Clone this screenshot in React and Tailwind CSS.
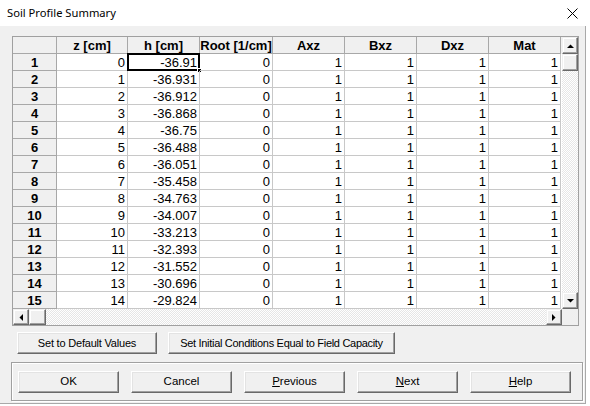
import React from "react";

const H = [-36.91, -36.931, -36.912, -36.868, -36.75, -36.488, -36.051, -35.458, -34.763, -34.007, -33.213, -32.393, -31.552, -30.696, -29.824];

const COLS = [
  { label: "z [cm]", w: "w-[71px]" },
  { label: "h [cm]", w: "w-[72px]" },
  { label: "Root [1/cm]", w: "w-[73px]" },
  { label: "Axz", w: "w-[72px]" },
  { label: "Bxz", w: "w-[72px]" },
  { label: "Dxz", w: "w-[72px]" },
  { label: "Mat", w: "w-[72px]" },
];

function Btn({ children, className = "" }) {
  return (
    <div
      className={
        "h-[22px] flex items-center justify-center bg-[#f0f0f0] border border-t-white border-l-white border-r-[#696969] border-b-[#696969] shadow-[inset_-1px_-1px_#a0a0a0,inset_1px_1px_#e3e3e3] text-black shrink-0 whitespace-nowrap " +
        className
      }
    >
      {children}
    </div>
  );
}

function Arrow({ dir }) {
  const pts = {
    up: "0,4 7,4 3.5,0.5",
    down: "0,0 7,0 3.5,3.5",
    left: "4,0 4,7 0.5,3.5",
    right: "0,0 0,7 3.5,3.5",
  }[dir];
  const vert = dir === "up" || dir === "down";
  return (
    <svg width={vert ? 7 : 4} height={vert ? 4 : 7} viewBox={vert ? "0 0 7 4" : "0 0 4 7"}>
      <polygon points={pts} fill="#000" />
    </svg>
  );
}

function SBtn({ children, className = "" }) {
  return (
    <div
      className={
        "bg-[#f0f0f0] border border-t-[#f0f0f0] border-l-[#f0f0f0] border-r-[#696969] border-b-[#696969] shadow-[inset_-1px_-1px_#a0a0a0,inset_1px_1px_#fff] flex items-center justify-center shrink-0 " +
        className
      }
    >
      {children}
    </div>
  );
}

const dither =
  "bg-[image:repeating-conic-gradient(#ffffff_0_25%,#e6e6e6_0_50%)] bg-[length:2px_2px]";

export default function App() {
  const rows = H.map((h, i) => [String(i), String(h), "0", "1", "1", "1", "1"]);
  return (
    <div
      className="w-[590px] h-[406px] bg-white overflow-hidden text-black"
      style={{ fontFamily: '"Liberation Sans", Arial, sans-serif' }}
    >
      {/* Title bar */}
      <div className="h-[26px] flex items-center justify-between pl-[7px] pr-[12px]">
        <span className="text-[11.2px] text-black" style={{ fontFamily: '"Noto Sans", "Open Sans", sans-serif' }}>
          Soil Profile Summary
        </span>
        <svg width="11" height="11" viewBox="0 0 11 11" className="mt-[1px]">
          <path d="M0.5 0.5 L10.5 10.5 M10.5 0.5 L0.5 10.5" stroke="#000" strokeWidth="1" />
        </svg>
      </div>

      {/* Body */}
      <div className="w-[586px] h-[378px] bg-[#f0f0f0] border-r border-b border-[#a9a9a9] pt-[10px] pl-[12px]">
        {/* Grid */}
        <div className="w-[567px] h-[290px] border border-[#a0a0a0] flex flex-col bg-white">
          <div className="flex h-[272px]">
            <div className="w-[549px] overflow-hidden">
              {/* Header */}
              <div className="flex h-[17px] bg-[#f0f0f0]">
                <div className="w-[44px] shrink-0 border-r border-b border-[#a8a8a8]" />
                {COLS.map((c) => (
                  <div
                    key={c.label}
                    className={c.w + " shrink-0 border-r border-b border-[#a8a8a8] flex items-center justify-center text-[13px] font-bold leading-none whitespace-nowrap"}
                  >
                    {c.label}
                  </div>
                ))}
              </div>
              {rows.map((r, i) => (
                <div key={i} className="flex h-[17px]">
                  <div className="w-[44px] shrink-0 bg-[#f0f0f0] border-r border-b border-[#a8a8a8] flex items-center justify-center text-[13px] font-bold leading-none">
                    {i + 1}
                  </div>
                  {r.map((v, j) => (
                    <div
                      key={j}
                      className={
                        COLS[j].w +
                        " shrink-0 border-r border-b border-[#c8c8c8] flex items-center justify-end pr-[2px] text-[13px] leading-none relative"
                      }
                    >
                      {v}
                      {i === 0 && j === 1 && (
                        <>
                          <div className="absolute left-[-1px] top-[-1px] right-[-1px] bottom-[-1px] border-2 border-black" />
                          <div className="absolute right-[-3px] bottom-[-3px] w-[5px] h-[5px] bg-black border border-white" />
                        </>
                      )}
                    </div>
                  ))}
                </div>
              ))}
            </div>
            {/* Vertical scrollbar */}
            <div className="w-[16px] flex flex-col">
              <SBtn className="h-[17px]">
                <Arrow dir="up" />
              </SBtn>
              <SBtn className="h-[17px]" />
              <div className={"flex-1 " + dither} />
              <SBtn className="h-[17px]">
                <Arrow dir="down" />
              </SBtn>
            </div>
          </div>
          {/* Horizontal scrollbar */}
          <div className="flex h-[16px]">
            <div className="w-[549px] flex">
              <SBtn className="w-[16px]">
                <Arrow dir="left" />
              </SBtn>
              <SBtn className="w-[17px]" />
              <div className={"flex-1 " + dither} />
              <SBtn className="w-[16px]">
                <Arrow dir="right" />
              </SBtn>
            </div>
            <div className="w-[16px] bg-[#f0f0f0]" />
          </div>
        </div>

        {/* Action buttons */}
        <div className="mt-[6px] ml-[5px] flex gap-[11px]">
          <Btn className="w-[140px] text-[11px] tracking-[-0.2px]">Set to Default Values</Btn>
          <Btn className="w-[227px] text-[11px] tracking-[-0.3px]">Set Initial Conditions Equal to Field Capacity</Btn>
        </div>

        {/* Group box */}
        <div className="mt-[8px] ml-[-1px] w-[572px] h-[39px] border border-[#a0a0a0] shadow-[inset_1px_1px_#fff,1px_1px_#fff] flex items-center pl-[6px] gap-[12px] text-[11.5px]">
          <Btn className="w-[101px]">OK</Btn>
          <Btn className="w-[101px]">Cancel</Btn>
          <Btn className="w-[101px]">
            <span>
              <span className="underline">P</span>revious
            </span>
          </Btn>
          <Btn className="w-[101px]">
            <span>
              <span className="underline">N</span>ext
            </span>
          </Btn>
          <Btn className="w-[101px]">
            <span>
              <span className="underline">H</span>elp
            </span>
          </Btn>
        </div>
      </div>
    </div>
  );
}
